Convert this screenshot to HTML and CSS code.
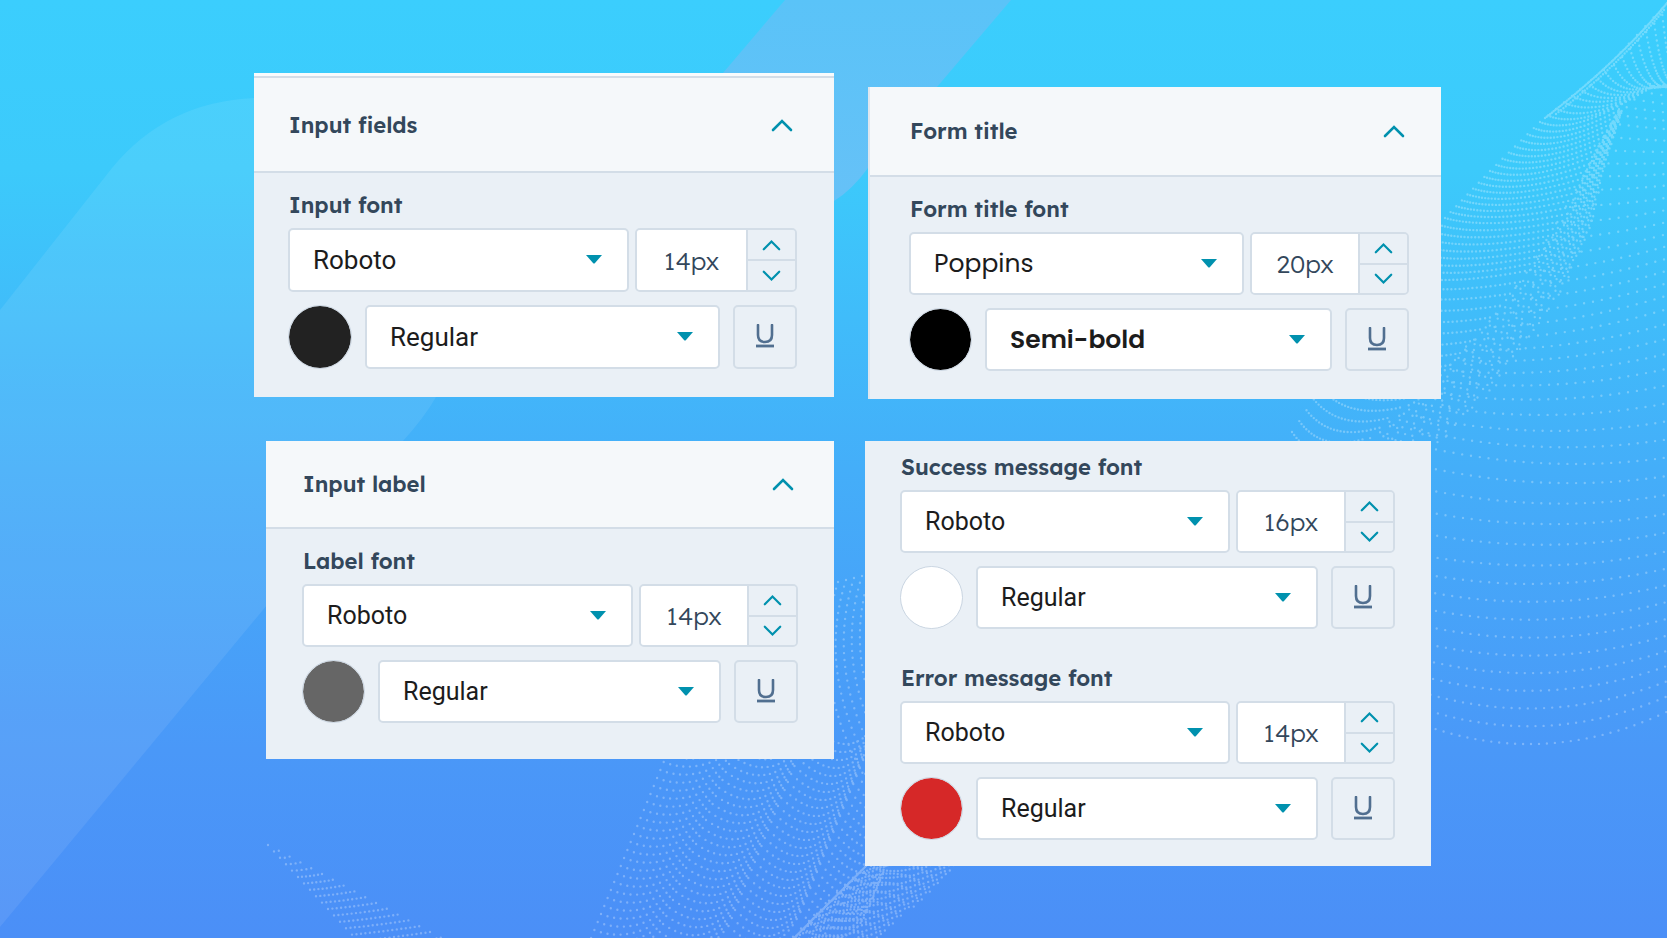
FILE: index.html
```html
<!DOCTYPE html>
<html lang="en">
  <head>
    <meta charset="utf-8" />
    <title>Form style settings</title>
    <meta name="viewport" content="width=device-width, initial-scale=1.0" />
    <link rel="stylesheet" href="styles.css" />
  </head>
  <body>
    <svg class="backdrop" viewBox="0 0 1667 938" preserveAspectRatio="none" aria-hidden="true">
      <defs>
        <linearGradient id="band" x1="0" y1="0" x2="0" y2="1">
          <stop offset="0" stop-color="#5ac3f8" />
          <stop offset="1" stop-color="#66c1f7" />
        </linearGradient>
      </defs>
      <path class="pill" d="M0 310 L112 168 Q166 102 254 98 C400 96 480 310 436 397 Q424 418 403 441 L0 927 Z" />
      <path fill="url(#band)" d="M785 0 H1011 L868 168 Q852 190 834 201 C780 230 690 130 723 73 Z" />
      <path id="dots" class="dots" />
    </svg>

    <!-- symbols shared by all panels -->
    <svg class="symbols" aria-hidden="true">
      <symbol id="chevron-up" viewBox="0 0 22 14">
        <path d="M2 12 L11 3 L20 12" fill="none" stroke="currentColor" stroke-width="2.6" stroke-linecap="round" />
      </symbol>
      <symbol id="chevron-down" viewBox="0 0 22 14">
        <path d="M2 2 L11 11 L20 2" fill="none" stroke="currentColor" stroke-width="2.6" stroke-linecap="round" />
      </symbol>
      <symbol id="caret" viewBox="0 0 16 9">
        <path d="M0 0 H16 L9 8 Q8 9 7 8 Z" fill="currentColor" />
      </symbol>
      <symbol id="underline" viewBox="0 0 18 26">
        <path d="M2 1 V11 Q2 18 9 18 Q16 18 16 11 V1" fill="none" stroke="currentColor" stroke-width="2.6" stroke-linecap="round" />
        <path d="M0 22 H18" stroke="currentColor" stroke-width="2.8" />
      </symbol>
    </svg>

    <main class="board">
      <div class="column column-left">
        <section class="panel panel-fields">
          <h2 class="panel-title">
            <button class="panel-toggle" type="button" aria-expanded="true">
              Input fields
              <svg class="chevron"><use href="#chevron-up" /></svg>
            </button>
          </h2>
          <div class="panel-body">
            <div class="font-group">
              <label class="font-label" for="input-font">Input font</label>
              <div class="row row-font">
                <div class="picker">
                  <select id="input-font">
                    <option>Roboto</option>
                  </select>
                  <svg class="caret"><use href="#caret" /></svg>
                </div>
                <div class="stepper">
                  <input type="text" value="14px" aria-label="Input font size" />
                  <div class="stepper-buttons">
                    <button type="button" aria-label="Increase"><svg><use href="#chevron-up" /></svg></button>
                    <button type="button" aria-label="Decrease"><svg><use href="#chevron-down" /></svg></button>
                  </div>
                </div>
              </div>
              <div class="row row-style">
                <input class="swatch" type="color" value="#222222" aria-label="Input font color" />
                <div class="picker">
                  <select aria-label="Input font weight">
                    <option>Regular</option>
                  </select>
                  <svg class="caret"><use href="#caret" /></svg>
                </div>
                <button class="underline" type="button" aria-label="Underline"><svg><use href="#underline" /></svg></button>
              </div>
            </div>
          </div>
        </section>

        <section class="panel panel-label">
          <h2 class="panel-title">
            <button class="panel-toggle" type="button" aria-expanded="true">
              Input label
              <svg class="chevron"><use href="#chevron-up" /></svg>
            </button>
          </h2>
          <div class="panel-body">
            <div class="font-group">
              <label class="font-label" for="label-font">Label font</label>
              <div class="row row-font">
                <div class="picker">
                  <select id="label-font">
                    <option>Roboto</option>
                  </select>
                  <svg class="caret"><use href="#caret" /></svg>
                </div>
                <div class="stepper">
                  <input type="text" value="14px" aria-label="Label font size" />
                  <div class="stepper-buttons">
                    <button type="button" aria-label="Increase"><svg><use href="#chevron-up" /></svg></button>
                    <button type="button" aria-label="Decrease"><svg><use href="#chevron-down" /></svg></button>
                  </div>
                </div>
              </div>
              <div class="row row-style">
                <input class="swatch" type="color" value="#666666" aria-label="Label font color" />
                <div class="picker">
                  <select aria-label="Label font weight">
                    <option>Regular</option>
                  </select>
                  <svg class="caret"><use href="#caret" /></svg>
                </div>
                <button class="underline" type="button" aria-label="Underline"><svg><use href="#underline" /></svg></button>
              </div>
            </div>
          </div>
        </section>
      </div>

      <div class="column column-right">
        <section class="panel panel-form-title">
          <h2 class="panel-title">
            <button class="panel-toggle" type="button" aria-expanded="true">
              Form title
              <svg class="chevron"><use href="#chevron-up" /></svg>
            </button>
          </h2>
          <div class="panel-body">
            <div class="font-group">
              <label class="font-label" for="title-font">Form title font</label>
              <div class="row row-font">
                <div class="picker">
                  <select id="title-font" class="poppins">
                    <option>Poppins</option>
                  </select>
                  <svg class="caret"><use href="#caret" /></svg>
                </div>
                <div class="stepper">
                  <input type="text" value="20px" aria-label="Form title font size" />
                  <div class="stepper-buttons">
                    <button type="button" aria-label="Increase"><svg><use href="#chevron-up" /></svg></button>
                    <button type="button" aria-label="Decrease"><svg><use href="#chevron-down" /></svg></button>
                  </div>
                </div>
              </div>
              <div class="row row-style">
                <input class="swatch" type="color" value="#000000" aria-label="Form title font color" />
                <div class="picker">
                  <select class="poppins semi-bold" aria-label="Form title font weight">
                    <option>Semi-bold</option>
                  </select>
                  <svg class="caret"><use href="#caret" /></svg>
                </div>
                <button class="underline" type="button" aria-label="Underline"><svg><use href="#underline" /></svg></button>
              </div>
            </div>
          </div>
        </section>

        <section class="panel panel-messages">
          <div class="panel-body">
            <div class="font-group">
              <label class="font-label" for="success-font">Success message font</label>
              <div class="row row-font">
                <div class="picker">
                  <select id="success-font">
                    <option>Roboto</option>
                  </select>
                  <svg class="caret"><use href="#caret" /></svg>
                </div>
                <div class="stepper">
                  <input type="text" value="16px" aria-label="Success message font size" />
                  <div class="stepper-buttons">
                    <button type="button" aria-label="Increase"><svg><use href="#chevron-up" /></svg></button>
                    <button type="button" aria-label="Decrease"><svg><use href="#chevron-down" /></svg></button>
                  </div>
                </div>
              </div>
              <div class="row row-style">
                <input class="swatch" type="color" value="#ffffff" aria-label="Success message font color" />
                <div class="picker">
                  <select aria-label="Success message font weight">
                    <option>Regular</option>
                  </select>
                  <svg class="caret"><use href="#caret" /></svg>
                </div>
                <button class="underline" type="button" aria-label="Underline"><svg><use href="#underline" /></svg></button>
              </div>
            </div>

            <div class="font-group">
              <label class="font-label" for="error-font">Error message font</label>
              <div class="row row-font">
                <div class="picker">
                  <select id="error-font">
                    <option>Roboto</option>
                  </select>
                  <svg class="caret"><use href="#caret" /></svg>
                </div>
                <div class="stepper">
                  <input type="text" value="14px" aria-label="Error message font size" />
                  <div class="stepper-buttons">
                    <button type="button" aria-label="Increase"><svg><use href="#chevron-up" /></svg></button>
                    <button type="button" aria-label="Decrease"><svg><use href="#chevron-down" /></svg></button>
                  </div>
                </div>
              </div>
              <div class="row row-style">
                <input class="swatch" type="color" value="#d62828" aria-label="Error message font color" />
                <div class="picker">
                  <select aria-label="Error message font weight">
                    <option>Regular</option>
                  </select>
                  <svg class="caret"><use href="#caret" /></svg>
                </div>
                <button class="underline" type="button" aria-label="Underline"><svg><use href="#underline" /></svg></button>
              </div>
            </div>
          </div>
        </section>
      </div>
    </main>
    <script src="dots.js"></script>
  </body>
</html>
```
FILE: styles.css
```css
* {
  box-sizing: border-box;
}
body {
  margin: 0;
  min-height: 100vh;
  position: relative;
  overflow-x: hidden;
  background: linear-gradient(#3bcefd 0%, #3ccafb 18%, #44aef9 50%, #4a98f8 80%, #4b8ff7 100%);
  font-family: "Lexend Deca", Inter, sans-serif;
  color: #33475b;
}
button,
input,
select {
  margin: 0;
  padding: 0;
  font: inherit;
  color: inherit;
}

/* Background drawing */
.backdrop {
  position: absolute;
  inset: 0;
  width: 100%;
  height: 100%;
}
.pill {
  fill: rgba(255, 255, 255, 0.08);
}
.dots {
  fill: none;
  stroke: rgba(255, 255, 255, 0.28);
  stroke-width: 2.4;
  stroke-linecap: round;
}
.symbols {
  position: absolute;
  width: 0;
  height: 0;
}

/* Layout */
.board {
  position: relative;
  display: grid;
  grid-template-columns: 254fr 580fr 31fr 576fr 226fr;
}
.column {
  display: flex;
  flex-direction: column;
}
.column-left {
  grid-column: 2;
  padding-top: 73px;
  gap: 44px;
}
.column-right {
  grid-column: 4;
  padding-top: 87px;
  gap: 42px;
}

/* Panels */
.panel {
  --left: 36px;
  --right: 36px;
  --row: 63px;
  --picker-size: 25px;
  background: #eaf0f6;
}
.panel-title {
  margin: 0;
  font-size: 22px;
  line-height: 28px;
  font-weight: 600;
}
.panel-toggle {
  display: flex;
  align-items: center;
  justify-content: space-between;
  width: 100%;
  padding: 30px calc(var(--right) + 4px) 30px calc(var(--left) + 1px);
  border: 0;
  border-bottom: 2px solid #d3dde7;
  background: #f5f8fa;
}
.chevron {
  width: 22px;
  height: 14px;
  color: #0091ae;
}
.panel-body {
  display: flex;
  flex-direction: column;
  gap: 35px;
  padding: 18px var(--right) 28px var(--left);
}
.panel-fields {
  --left: 34px;
  --right: 37px;
  --row: 64px;
  --picker-size: 26px;
  border-top: 3px solid #f9fbfc;
}
.panel-fields .panel-toggle {
  padding-top: 33px;
  padding-bottom: 32px;
  border-top: 2px solid #d3dde7;
}
.panel-label {
  margin-left: 12px;
}
.panel-label .panel-toggle {
  padding-top: 29px;
  padding-bottom: 29px;
}
.panel-label .panel-body {
  padding-bottom: 36px;
}
.panel-form-title {
  --left: 39px;
  --right: 32px;
  margin-left: 3px;
  border-left: 2px solid #dfe6ee;
}
.panel-messages {
  --left: 35px;
  --right: 36px;
  margin-right: 10px;
}
.panel-messages .panel-body {
  padding-top: 12px;
  padding-bottom: 26px;
}

/* Font controls */
.font-label {
  display: block;
  margin: 0 0 9px 1px;
  font-size: 22px;
  line-height: 28px;
  font-weight: 600;
}
.row {
  display: flex;
  height: var(--row);
}
.row-font {
  gap: 6px;
}
.row-style {
  gap: 13px;
  margin-top: 13px;
}
.picker {
  position: relative;
  flex: 1;
  min-width: 0;
}
.picker select {
  appearance: none;
  width: 100%;
  height: 100%;
  padding: 0 60px 0 23px;
  border: 2px solid #d3dde7;
  border-radius: 5px;
  background: #fff;
  color: #1c1c1c;
  font-family: Roboto, sans-serif;
  font-size: var(--picker-size);
}
.picker .poppins {
  font-family: Poppins, Inter, sans-serif;
}
.picker .semi-bold {
  font-weight: 600;
}
.caret {
  position: absolute;
  right: 27px;
  top: 27px;
  width: 16px;
  height: 9px;
  color: #0091ae;
  pointer-events: none;
}
.stepper {
  display: flex;
  width: 159px;
  border: 2px solid #d3dde7;
  border-radius: 5px;
  overflow: hidden;
}
.panel-fields .stepper {
  width: 162px;
}
.stepper input {
  flex: 1;
  min-width: 0;
  border: 0;
  background: #fff;
  font-size: 25px;
  font-weight: 300;
  text-align: center;
}
.stepper-buttons {
  display: flex;
  flex-direction: column;
  width: 49px;
  border-left: 2px solid #d3dde7;
}
.stepper-buttons button {
  display: flex;
  flex: 1;
  align-items: center;
  justify-content: center;
  border: 0;
  background: #eaf0f6;
  color: #0091ae;
}
.stepper-buttons button + button {
  border-top: 2px solid #d3dde7;
}
.stepper-buttons svg {
  width: 19px;
  height: 12px;
}
.swatch {
  appearance: none;
  width: var(--row);
  height: var(--row);
  border: 1px solid #cbd6e2;
  border-radius: 50%;
  background: none;
  overflow: hidden;
}
.swatch::-webkit-color-swatch-wrapper {
  padding: 0;
}
.swatch::-webkit-color-swatch {
  border: 0;
  border-radius: 50%;
}
.underline {
  display: flex;
  align-items: center;
  justify-content: center;
  width: 64px;
  border: 2px solid #d3dde7;
  border-radius: 5px;
  background: #eaf0f6;
  color: #516f90;
}
.underline svg {
  width: 18px;
  height: 26px;
}
```
FILE: dots.js
```javascript
const parts = [];

function dot(x, y) {
  parts.push(`M${x.toFixed(1)} ${y.toFixed(1)}h0`);
}

// point at t (0..1) on a list of evenly spaced points
function along(points, t) {
  const pos = t * (points.length - 1);
  const i = Math.min(Math.floor(pos), points.length - 2);
  const f = pos - i;
  return points[i].map((v, k) => v + (points[i + 1][k] - v) * f);
}

// row of dots on a quadratic curve
function row(a, c, b, step) {
  const length = Math.hypot(c[0] - a[0], c[1] - a[1]) + Math.hypot(b[0] - c[0], b[1] - c[1]);
  const count = Math.max(1, Math.round(length / step));
  for (let i = 0; i <= count; i++) {
    const t = i / count;
    const u = 1 - t;
    dot(
      u * u * a[0] + 2 * u * t * c[0] + t * t * b[0],
      u * u * a[1] + 2 * u * t * c[1] + t * t * b[1]
    );
  }
}

// upper wing, left of the fold
const edge = [[1670, 0], [1604, 70], [1540, 122], [1490, 171], [1445, 218], [1400, 275], [1350, 345], [1292, 432]];
const fold = [[1690, 84], [1654, 86], [1622, 104], [1592, 157], [1567, 214], [1530, 270], [1450, 365], [1350, 450]];
for (let i = 0; i <= 56; i++) {
  const a = along(edge, i / 56);
  const b = along(fold, i / 56);
  row(a, [a[0] * 0.65 + b[0] * 0.35, Math.max(a[1], b[1]) + 12], b, 4);
}

// bright rim at the tip
row([1667, 3], [1618, 62], [1545, 118], 2);
row([1664, 10], [1618, 66], [1556, 114], 3);

// upper wing, right of the fold
const start = [[1650, 84], [1612, 122], [1578, 186], [1530, 268], [1480, 335], [1430, 385], [1380, 440], [1340, 540], [1345, 620], [1380, 706]];
const end = [[1690, 92], [1690, 130], [1690, 180], [1690, 235], [1690, 295], [1690, 370], [1690, 460], [1690, 550], [1690, 630], [1690, 700]];
for (let i = 0; i <= 44; i++) {
  const t = i / 44;
  const a = along(start, t);
  const b = along(end, t);
  row(a, [(a[0] + b[0]) / 2, (a[1] + b[1]) / 2 + 82 * t * t], b, 9);
}

// loose band that follows the fold
for (let i = 0; i < 560; i++) {
  const t = 0.3 + ((i * 0.618034) % 1) * 0.7;
  const p = along(fold, t);
  const off = ((i * 0.754878) % 1) * 80 * (t - 0.26);
  dot(p[0] + off, p[1] + off * 0.4);
}

// hanging arcs in the lower middle
for (let i = 0; i < 26; i++) {
  let x = 667 - i * 3.3;
  let y = 754 + i * 8;
  for (let k = 0; k < 4; k++) {
    row([x, y], [x + 36 + k * 4, y + 14 + k * 14], [x + 72, y - 14], 8);
    x += 72;
    y -= 14;
  }
}
for (let i = 0; i < 14; i++) {
  row([838 + i * 8, 582 - i * 2], [800 + i * 9, 700 - i * 5], [900 + i * 4, 830 - i * 12], 8);
}

// dense wedge at the bottom
for (let y = 866; y < 942; y += 4) {
  const left = 865 - (y - 866);
  const right = 958 - (y - 866) * 1.1;
  for (let x = left; x < right; x += 3 + ((x - left) / 90) * 2) {
    dot(x, y + Math.sin(x * 1.7 + y) * 1.6);
  }
}
row([866, 866], [830, 902], [793, 939], 1.5);

// small fan at the bottom left
for (let i = 0; i < 17; i++) {
  const a = [268 + i * 6, 845 + i * 6.4];
  const b = [268 + i * 10.8, 845 + i * 5.8];
  row(a, [(a[0] + b[0]) / 2, (a[1] + b[1]) / 2 + 1], b, 4.4);
}

document.getElementById('dots').setAttribute('d', parts.join(''));
```
